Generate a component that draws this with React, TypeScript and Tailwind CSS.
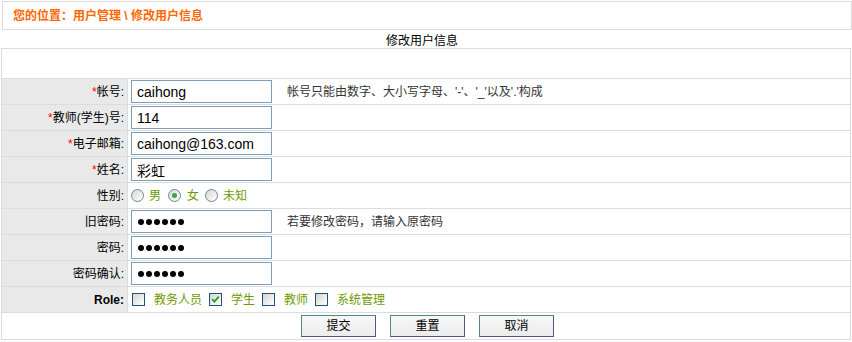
import React from 'react';

const inputCls =
  "h-[23px] w-[141px] border border-[#7f9db9] bg-white px-[5px] text-[14px] text-black outline-none font-['Liberation_Sans','Noto_Sans_CJK_SC',sans-serif]";

const Label: React.FC<{ text: string; required?: boolean; bold?: boolean }> = ({ text, required, bold }) => (
  <div className={`flex h-full w-[126px] shrink-0 items-center justify-end border-r border-[#dcdcdc] bg-[#e9e9e9] pr-[3px] text-black ${bold ? 'font-bold' : ''}`}>
    {required && <span className="text-[#ff0000]">*</span>}
    {text}
  </div>
);

const Row: React.FC<{ children: React.ReactNode; last?: boolean }> = ({ children, last }) => (
  <div className={`flex ${last ? 'h-[27px]' : 'h-[26px]'} items-stretch border-b border-[#dcdcdc]`}>{children}</div>
);

const Radio: React.FC<{ checked?: boolean }> = ({ checked }) => (
  <span className="flex h-[13px] w-[13px] items-center justify-center rounded-full border border-[#6f8399] bg-linear-to-br from-[#d8d8d2] to-white">
    {checked && <span className="h-[5px] w-[5px] rounded-full bg-[#3da53d]" />}
  </span>
);

const Check: React.FC<{ checked?: boolean }> = ({ checked }) => (
  <span className="flex h-[13px] w-[13px] items-center justify-center border border-[#1c5180] bg-linear-to-br from-[#d6d6d0] to-white">
    {checked && (
      <svg width="9" height="9" viewBox="0 0 9 9">
        <path d="M1.2 4.2 L3.4 6.6 L7.8 1.6" fill="none" stroke="#21a121" strokeWidth="1.8" />
      </svg>
    )}
  </span>
);

const Password: React.FC = () => (
  <div className="flex h-[23px] w-[141px] items-center gap-[2px] border border-[#7f9db9] bg-white pl-[6px]">
    {[0, 1, 2, 3, 4, 5].map((i) => (
      <span key={i} className="h-[6px] w-[6px] rounded-full bg-black" />
    ))}
  </div>
);

const Btn: React.FC<{ text: string }> = ({ text }) => (
  <button className="h-[22px] w-[75px] border border-t-[#4f8a8b] border-l-[#4f8a8b] border-r-[#55558a] border-b-[#55558a] bg-linear-to-b from-[#f7f7f7] to-[#ececec] text-[12px] text-black">
    {text}
  </button>
);

export default function App() {
  const roles = [
    { name: '教务人员', checked: false },
    { name: '学生', checked: true },
    { name: '教师', checked: false },
    { name: '系统管理', checked: false },
  ];

  return (
    <div className="h-[342px] w-[852px] bg-white text-[12px] font-['Liberation_Sans','Noto_Sans_CJK_SC',sans-serif]">
      <div className="ml-[2px] mt-px flex h-[29px] w-[850px] items-center border border-[#dcdcdc] pl-[10px] font-bold text-[#ff6600]">
        您的位置：用户管理 \ 修改用户信息
      </div>

      <div className="flex h-[18px] items-end justify-center pr-[8px] leading-[14px] text-black">修改用户信息</div>

      <div className="ml-px w-[850px] border-l border-r border-t border-[#dcdcdc]">
        <div className="h-[30px] border-b border-[#dcdcdc]" />

        <Row>
          <Label text="帐号:" required />
          <div className="flex items-center pl-[3px]">
            <input className={inputCls} defaultValue="caihong" readOnly />
            <span className="ml-[15px] text-[#333]">帐号只能由数字、大小写字母、'-'、'_'以及'.'构成</span>
          </div>
        </Row>
        <Row>
          <Label text="教师(学生)号:" required />
          <div className="flex items-center pl-[3px]">
            <input className={inputCls} defaultValue="114" readOnly />
          </div>
        </Row>
        <Row>
          <Label text="电子邮箱:" required />
          <div className="flex items-center pl-[3px]">
            <input className={inputCls} defaultValue="caihong@163.com" readOnly />
          </div>
        </Row>
        <Row>
          <Label text="姓名:" required />
          <div className="flex items-center pl-[3px]">
            <input className={inputCls} defaultValue="彩虹" readOnly />
          </div>
        </Row>
        <Row>
          <Label text="性别:" />
          <div className="flex items-center pl-[3px] text-[#6f9a00]">
            <Radio />
            <span className="ml-[5px] mr-[7px]">男</span>
            <Radio checked />
            <span className="ml-[6px] mr-[6px]">女</span>
            <Radio />
            <span className="ml-[5px]">未知</span>
          </div>
        </Row>
        <Row>
          <Label text="旧密码:" />
          <div className="flex items-center pl-[3px]">
            <Password />
            <span className="ml-[15px] text-[#333]">若要修改密码，请输入原密码</span>
          </div>
        </Row>
        <Row>
          <Label text="密码:" />
          <div className="flex items-center pl-[3px]">
            <Password />
          </div>
        </Row>
        <Row>
          <Label text="密码确认:" />
          <div className="flex items-center pl-[3px]">
            <Password />
          </div>
        </Row>
        <Row>
          <Label text="Role:" bold />
          <div className="flex items-center pl-[4px] text-[#6f9a00]">
            {roles.map((r) => (
              <React.Fragment key={r.name}>
                <Check checked={r.checked} />
                <span className="ml-[9px] mr-[7px]">{r.name}</span>
              </React.Fragment>
            ))}
          </div>
        </Row>
        <Row last>
          <div className="flex w-full items-center justify-center gap-[14px] pl-[3px]">
            <Btn text="提交" />
            <Btn text="重置" />
            <Btn text="取消" />
          </div>
        </Row>
      </div>
    </div>
  );
}
